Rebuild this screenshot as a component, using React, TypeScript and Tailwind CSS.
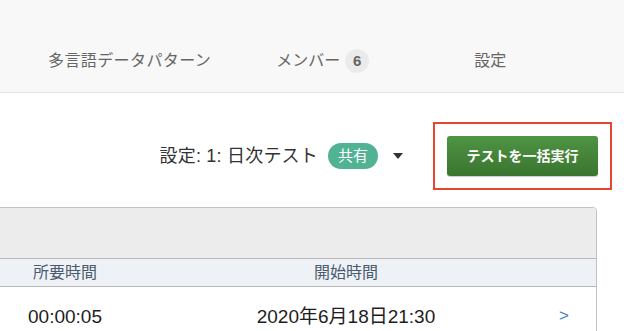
import React from 'react';

const jp = 'font-["Liberation_Sans","Noto_Sans_CJK_JP",sans-serif]';

function NavTabs() {
  return (
    <div className="h-[93px] bg-[#f8f8f8] border-b border-[#e4e4e4] flex items-center pt-[30px] pl-[48px] text-[16px] text-[#666666]">
      <span className="tracking-[0.4px]">多言語データパターン</span>
      <span className="ml-[65px] flex items-center">
        メンバー
        <span className="ml-[5px] w-[24px] h-[24px] rounded-full bg-[#ebebeb] flex items-center justify-center text-[15px] font-bold text-[#666]">
          6
        </span>
      </span>
      <span className="ml-[105px]">設定</span>
    </div>
  );
}

function Toolbar() {
  return (
    <div className="flex items-center justify-end pr-[12px] pt-[29px]">
      <div className="flex items-center text-[18px] text-[#333]">
        <span className="tracking-[0.2px]">設定: 1: 日次テスト</span>
        <span className="ml-[10px] h-[26px] px-[10px] rounded-full bg-[#52b394] text-white text-[15px] flex items-center">
          共有
        </span>
        <svg className="ml-[15px]" width="10" height="7" viewBox="0 0 10 7">
          <path d="M0 0 L10 0 L5 6 Z" fill="#333" />
        </svg>
      </div>
      <div className="ml-[30px] border-2 border-[#e8452f] px-[12px] py-[12px]">
        <button className="h-[40px] w-[151px] rounded-[3px] bg-gradient-to-b from-[#4f9444] to-[#3a752f] text-white text-[14px] font-bold shadow-[0_1px_1px_rgba(0,0,0,0.2)]">
          テストを一括実行
        </button>
      </div>
    </div>
  );
}

function RunsTable() {
  return (
    <div className="mt-[17px] mr-[27px] -ml-[2px] border border-[#c2c2c2] rounded-tr-[4px] overflow-hidden">
      <div className="h-[51px] bg-[#ececec] border-b border-[#b8b8b8]" />
      <div className="grid grid-cols-[132px_430px_1fr] h-[28px] items-center bg-[#eef2f7] border-b border-[#b8b8b8] text-[16px] text-[#4a5b6d]">
        <span className="text-center">所要時間</span>
        <span className="text-center">開始時間</span>
        <span />
      </div>
      <div className="grid grid-cols-[132px_430px_1fr] h-[60px] items-center bg-white text-[19px] text-[#1e1e1e]">
        <span className="text-center">00:00:05</span>
        <span className="text-center">2020年6月18日21:30</span>
        <span className="-ml-[2px] text-[#3f7fc1] text-[17px] -mt-[2px]">&gt;</span>
      </div>
    </div>
  );
}

export default function App() {
  return (
    <div className={`w-[624px] h-[331px] overflow-hidden bg-white ${jp}`}>
      <NavTabs />
      <Toolbar />
      <RunsTable />
    </div>
  );
}
